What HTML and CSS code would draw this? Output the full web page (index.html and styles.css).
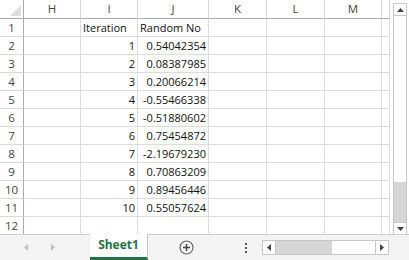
FILE: index.html
```html
<!DOCTYPE html>
<html>
<head>
<meta charset="utf-8">
<link rel="stylesheet" href="styles.css">
</head>
<body>
<div class="app">
  <div class="main">
    <div class="sheet">
      <div class="corner"><span class="tri"></span></div>
      <div class="ch">H</div><div class="ch">I</div><div class="ch">J</div><div class="ch">K</div><div class="ch">L</div><div class="ch">M</div><div class="ch"></div>

      <div class="rh">1</div><div class="c"></div><div class="c">Iteration</div><div class="c">Random No</div><div class="c"></div><div class="c"></div><div class="c"></div><div class="c"></div>
      <div class="rh">2</div><div class="c"></div><div class="c n">1</div><div class="c n">0.54042354</div><div class="c"></div><div class="c"></div><div class="c"></div><div class="c"></div>
      <div class="rh">3</div><div class="c"></div><div class="c n">2</div><div class="c n">0.08387985</div><div class="c"></div><div class="c"></div><div class="c"></div><div class="c"></div>
      <div class="rh">4</div><div class="c"></div><div class="c n">3</div><div class="c n">0.20066214</div><div class="c"></div><div class="c"></div><div class="c"></div><div class="c"></div>
      <div class="rh">5</div><div class="c"></div><div class="c n">4</div><div class="c n">-0.55466338</div><div class="c"></div><div class="c"></div><div class="c"></div><div class="c"></div>
      <div class="rh">6</div><div class="c"></div><div class="c n">5</div><div class="c n">-0.51880602</div><div class="c"></div><div class="c"></div><div class="c"></div><div class="c"></div>
      <div class="rh">7</div><div class="c"></div><div class="c n">6</div><div class="c n">0.75454872</div><div class="c"></div><div class="c"></div><div class="c"></div><div class="c"></div>
      <div class="rh">8</div><div class="c"></div><div class="c n">7</div><div class="c n">-2.19679230</div><div class="c"></div><div class="c"></div><div class="c"></div><div class="c"></div>
      <div class="rh">9</div><div class="c"></div><div class="c n">8</div><div class="c n">0.70863209</div><div class="c"></div><div class="c"></div><div class="c"></div><div class="c"></div>
      <div class="rh">10</div><div class="c"></div><div class="c n">9</div><div class="c n">0.89456446</div><div class="c"></div><div class="c"></div><div class="c"></div><div class="c"></div>
      <div class="rh">11</div><div class="c"></div><div class="c n">10</div><div class="c n">0.55057624</div><div class="c"></div><div class="c"></div><div class="c"></div><div class="c"></div>
      <div class="rh">12</div><div class="c"></div><div class="c"></div><div class="c"></div><div class="c"></div><div class="c"></div><div class="c"></div><div class="c"></div>
    </div>
    <div class="vscroll">
      <div class="sbtn"><svg width="7" height="4" viewBox="0 0 7 4"><path d="M0 4 L3.5 0 L7 4 Z" fill="#444"/></svg></div>
      <div class="vtrack"><div class="vthumb"></div></div>
      <div class="sbtn"><svg width="7" height="4" viewBox="0 0 7 4"><path d="M0 0 L3.5 4 L7 0 Z" fill="#444"/></svg></div>
    </div>
  </div>
  <div class="tabbar">
    <div class="navs">
      <svg width="4" height="7" viewBox="0 0 4 7"><path d="M4 0 L0 3.5 L4 7 Z" fill="#bdbdbd"/></svg>
      <svg width="4" height="7" viewBox="0 0 4 7"><path d="M0 0 L4 3.5 L0 7 Z" fill="#bdbdbd"/></svg>
    </div>
    <div class="tab">Sheet1</div>
    <div class="add"><svg width="15" height="15" viewBox="0 0 15 15"><circle cx="7.5" cy="7.5" r="6.5" fill="none" stroke="#666" stroke-width="1.2"/><path d="M7.5 4 V11 M4 7.5 H11" stroke="#444" stroke-width="1.4"/></svg></div>
    <div class="dots"><span></span><span></span><span></span></div>
    <div class="hscroll">
      <div class="hbtn"><svg width="4" height="7" viewBox="0 0 4 7"><path d="M4 0 L0 3.5 L4 7 Z" fill="#444"/></svg></div>
      <div class="hthumb"></div>
      <div class="htrack"></div>
      <div class="hbtn"><svg width="4" height="7" viewBox="0 0 4 7"><path d="M0 0 L4 3.5 L0 7 Z" fill="#444"/></svg></div>
    </div>
  </div>
</div>
</body>
</html>
```
FILE: styles.css
```css
html, body {
  margin: 0;
  padding: 0;
  background: #fff;
}
.app {
  width: 409px;
  height: 260px;
  display: flex;
  flex-direction: column;
  font-family: "Open Sans", "Liberation Sans", sans-serif;
  font-size: 11px;
  color: #000;
  overflow: hidden;
}
.main {
  display: flex;
  height: 235px;
}
.sheet {
  display: grid;
  grid-template-columns: 24px 57px 57px 71px 58px 58px 57px 8px;
  grid-template-rows: 19px repeat(12, 18px);
  width: 390px;
  height: 235px;
}
.sheet > div {
  box-sizing: border-box;
  border-right: 1px solid #dcdcdc;
  border-bottom: 1px solid #dcdcdc;
  line-height: 17px;
  white-space: nowrap;
  overflow: hidden;
}
.corner {
  position: relative;
  border-right-color: #ababab !important;
  border-bottom-color: #ababab !important;
}
.tri {
  position: absolute;
  right: 2px;
  bottom: 2px;
  width: 0;
  height: 0;
  border-left: 11px solid transparent;
  border-bottom: 11px solid #dfdfdf;
}
.sheet > .ch {
  text-align: center;
  color: #444;
  font-size: 11.5px;
  border-right-color: #d8d8d8;
  border-bottom-color: #ababab;
  line-height: 18px;
}
.sheet > .rh {
  text-align: center;
  color: #444;
  font-size: 11.5px;
  border-right-color: #ababab;
  border-bottom-color: #d8d8d8;
}
.c {
  padding: 0 2px;
  color: #111;
}
.n {
  text-align: right;
}
.vscroll {
  margin-left: 3px;
  width: 14px;
  display: flex;
  flex-direction: column;
  padding-top: 3px;
}
.sbtn {
  height: 13px;
  box-sizing: border-box;
  border: 1px solid #c8c8c8;
  background: #fff;
  display: flex;
  align-items: center;
  justify-content: center;
}
.vtrack {
  flex: 1;
  border-left: 1px solid #c8c8c8;
  border-right: 1px solid #c8c8c8;
  background: #fff;
  display: flex;
  flex-direction: column;
  justify-content: flex-end;
}
.vthumb {
  height: 40px;
  background: #d6d6d6;
}
.tabbar {
  flex: 1;
  display: flex;
  align-items: stretch;
  background: #f3f3f3;
  border-top: 1px solid #d0d0d0;
  margin-top: -1px;
}
.navs {
  width: 90px;
  display: flex;
  align-items: center;
  justify-content: center;
  gap: 23px;
  padding-right: 12px;
  box-sizing: border-box;
}
.tab {
  width: 58px;
  margin-top: -1px;
  background: #fff;
  border-right: 1px solid #c6c6c6;
  border-bottom: 3px solid #217346;
  box-sizing: border-box;
  color: #217346;
  font-weight: bold;
  text-align: center;
  line-height: 22px;
  font-size: 12px;
}
.add {
  width: 76px;
  display: flex;
  align-items: center;
  justify-content: center;
}
.dots {
  margin-left: 12px;
  width: 20px;
  display: flex;
  flex-direction: column;
  align-items: center;
  justify-content: center;
  gap: 2px;
}
.dots span {
  width: 2px;
  height: 2px;
  background: #555;
}
.hscroll {
  margin-left: 6px;
  width: 127px;
  height: 13px;
  align-self: center;
  display: flex;
  border-top: 1px solid #c8c8c8;
  border-bottom: 1px solid #c8c8c8;
  background: #fff;
}
.hbtn {
  width: 12px;
  display: flex;
  align-items: center;
  justify-content: center;
  border-left: 1px solid #c8c8c8;
  border-right: 1px solid #c8c8c8;
  background: #fff;
}
.hthumb {
  width: 56px;
  background: #d6d6d6;
}
.htrack {
  flex: 1;
}
```
